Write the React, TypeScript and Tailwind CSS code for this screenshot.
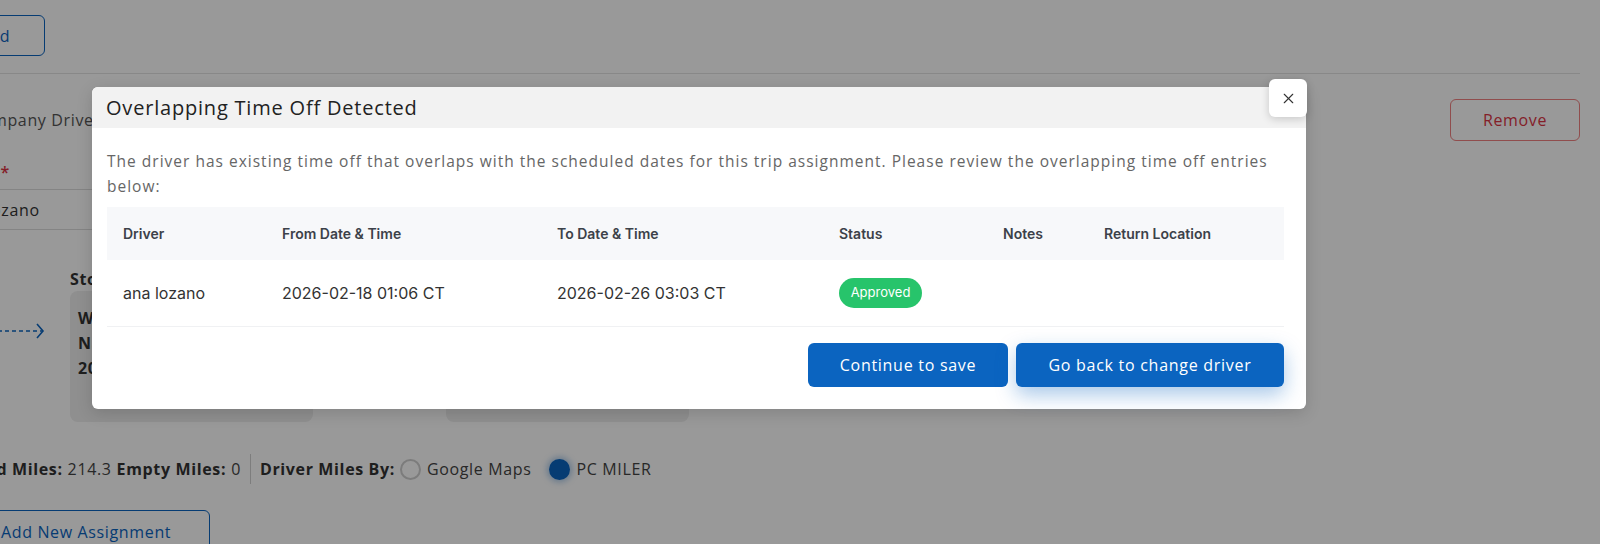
import React from 'react';
import { X } from 'lucide-react';

const page = "font-['Open_Sans','Liberation_Sans',sans-serif]";
const ui = "font-['Inter','Liberation_Sans',sans-serif]";

const overlaps = [
  {
    id: 1,
    driver: 'ana lozano',
    from: '2026-02-18 01:06 CT',
    to: '2026-02-26 03:03 CT',
    status: 'Approved',
    notes: '',
    returnLocation: '',
  },
];

const cols = 'grid grid-cols-[159px_275px_282px_164px_101px_1fr]';

const StopCard = ({ label, lines }: { label: string; lines: string[] }) => (
  <div className="flex flex-col">
    <div className="h-[25px] text-[16px] font-bold leading-[25px] text-[#333]">{label}</div>
    <div className="mt-[-1px] h-[131px] w-[243px] rounded-lg bg-[#eeeeee] px-2 pt-[15px] text-[16px] font-bold leading-[25px] text-[#333]">
      {lines.map((l) => (
        <div key={l} className="whitespace-nowrap">
          {l}
        </div>
      ))}
    </div>
  </div>
);

const Arrow = ({ w }: { w: number }) => (
  <svg width={w} height="20" viewBox={`0 0 ${w} 20`} className="shrink-0">
    <line x1="0" y1="10" x2={w - 3} y2="10" stroke="#0b64c0" strokeWidth="1.6" strokeDasharray="4 3" />
    <polyline points={`${w - 8},3 ${w - 2},10 ${w - 8},17`} fill="none" stroke="#0b64c0" strokeWidth="1.6" />
  </svg>
);

const Background = () => (
  <div className={`flex h-[544px] flex-col overflow-hidden bg-white pt-[15px] text-[16px] tracking-[0.04em] text-[#444] ${page}`}>
    <button className="-ml-[56px] h-[41px] w-[101px] shrink-0 rounded-md border border-[#0b64c0] text-[#0b64c0]">
      Add
    </button>
    <div className="mt-[17px] h-px w-[1580px] shrink-0 bg-[#e3e3e3]" />
    <div className="mt-[25px] flex h-[42px] w-[1580px] shrink-0 items-center justify-between">
      <span className="-ml-[29px] text-[#555]">Company Driver</span>
      <button className="h-[42px] w-[130px] rounded-md border border-[#f08080] text-[#dc3545]">Remove</button>
    </div>
    <div className="mt-[21px] h-[20px] shrink-0 -ml-[56px] leading-[20px] font-semibold text-[#333]">
      Driver <span className="text-[#dc3545]">*</span>
    </div>
    <div className="mt-[7px] flex h-[41px] w-[700px] shrink-0 items-center border-y border-[#dcdcdc] -ml-[48px] text-[#333]">
      ana lozano
    </div>
    <div className="mt-[37px] flex shrink-0 items-start">
      <div className="-ml-[30px] mt-[54px] mr-[25px]">
        <Arrow w={75} />
      </div>
      <StopCard label="Stop 1" lines={['Warehouse', 'Nashville, TN', '2026-02-18 08:00']} />
      <div className="mx-[10px] mt-[54px]">
        <Arrow w={113} />
      </div>
      <StopCard label="Stop 2" lines={['Distribution', 'Memphis, TN', '2026-02-20 14:00']} />
    </div>
    <div className="mt-[32px] flex h-[30px] shrink-0 items-center -ml-[55px] whitespace-nowrap">
      <span className="font-bold text-[#333]">Loaded Miles:</span>
      <span className="ml-[5px]">214.3</span>
      <span className="ml-[5px] font-bold text-[#333]">Empty Miles:</span>
      <span className="ml-[5px]">0</span>
      <span className="mx-[9px] h-[30px] w-px bg-[#d0d0d0]" />
      <span className="font-bold text-[#333]">Driver Miles By:</span>
      <span className="ml-[5px] h-[21px] w-[21px] rounded-full border-2 border-[#cfcfcf] bg-white" />
      <span className="ml-[6px]">Google Maps</span>
      <span className="ml-[18px] h-[21px] w-[21px] rounded-full bg-[#0b64c0] shadow-[0_0_6px_2px_rgba(11,100,192,0.35)]" />
      <span className="ml-[6px]">PC MILER</span>
    </div>
    <button className="mt-[26px] -ml-[40px] h-[44px] w-[250px] shrink-0 rounded-md border border-[#0b64c0] pl-[40px] text-left text-[#0b64c0]">
      Add New Assignment
    </button>
  </div>
);

const App: React.FC = () => {
  return (
    <div className="relative h-[544px] w-[1600px] overflow-hidden">
      <Background />
      <div className="absolute inset-0 bg-black/40">
        <div className="pl-[92px] pt-[87px]">
          <div className={`relative w-[1214px] rounded-md bg-white shadow-[0_4px_16px_rgba(0,0,0,0.15)] ${page}`}>
            <div className="flex h-[41px] items-center rounded-t-md bg-[#f2f2f2] px-[14px]">
              <h2 className="text-[20px] tracking-[0.04em] text-[#222]">Overlapping Time Off Detected</h2>
            </div>
            <button className="absolute right-[-1px] top-[-8px] flex h-[38px] w-[38px] items-center justify-center rounded-md bg-white shadow-[0_2px_8px_rgba(0,0,0,0.18)]">
              <X size={17} strokeWidth={1.6} color="#333" />
            </button>
            <div className="pb-[22px] pl-[15px] pr-[22px] pt-[21px]">
              <p className="text-[15.5px] leading-[25px] tracking-[0.065em] text-[#666]">
                The driver has existing time off that overlaps with the scheduled dates for this trip assignment. Please
                review the overlapping time off entries below:
              </p>
              <div className={`mt-[8px] ${ui}`}>
                <div className={`${cols} h-[53px] items-center bg-[#f7f8fa] px-4 text-[14px] font-semibold text-[#3c4149]`}>
                  <div>Driver</div>
                  <div>From Date &amp; Time</div>
                  <div>To Date &amp; Time</div>
                  <div>Status</div>
                  <div>Notes</div>
                  <div>Return Location</div>
                </div>
                {overlaps.map((o) => (
                  <div
                    key={o.id}
                    className={`${cols} h-[67px] items-center border-b border-[#f0f1f3] px-4 text-[16px] text-[#333]`}
                  >
                    <div>{o.driver}</div>
                    <div>{o.from}</div>
                    <div>{o.to}</div>
                    <div>
                      <span className="inline-flex h-[30px] w-[83px] items-center justify-center rounded-full bg-[#27c46b] text-[13px] text-white">
                        {o.status}
                      </span>
                    </div>
                    <div>{o.notes}</div>
                    <div>{o.returnLocation}</div>
                  </div>
                ))}
              </div>
              <div className="mt-[16px] flex justify-end gap-[8px]">
                <button className="h-[44px] w-[200px] rounded-md bg-[#0b64c0] text-[16px] tracking-[0.045em] text-white">
                  Continue to save
                </button>
                <button className="h-[44px] w-[268px] rounded-md bg-[#0b64c0] text-[16px] tracking-[0.045em] text-white shadow-[0_8px_20px_rgba(11,100,192,0.35)]">
                  Go back to change driver
                </button>
              </div>
            </div>
          </div>
        </div>
      </div>
    </div>
  );
};

export default App;
